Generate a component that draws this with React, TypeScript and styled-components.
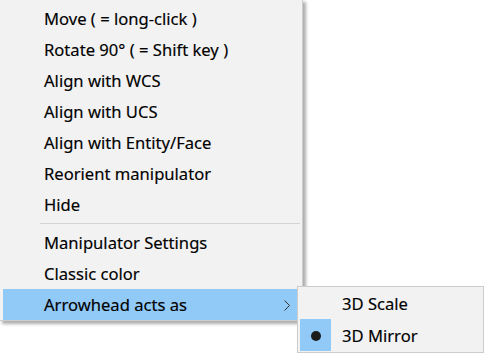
import React from "react";
import styled, { createGlobalStyle } from "styled-components";

const GlobalStyle = createGlobalStyle`
  html, body {
    margin: 0;
    padding: 0;
    background: #ffffff;
  }
  body {
    min-height: 354px;
    font-family: "Noto Sans", "Open Sans", "Liberation Sans", sans-serif;
    font-size: 16.6px;
    color: #000000;
  }
  #root {
    min-height: 354px;
  }
`;

const Menu = styled.div`
  position: relative;
  box-sizing: content-box;
  width: 297px;
  margin: -1px 0 0 -1px;
  padding: 3px 2px 0 3px;
  background: #f2f2f2;
  border: 1px solid #cccccc;
  box-shadow: 3px 3px 3px rgba(0, 0, 0, 0.32);
  display: flex;
  flex-direction: column;
`;

const SubMenu = styled.div`
  position: absolute;
  top: -3px;
  left: calc(100% - 3px);
  box-sizing: border-box;
  width: 187px;
  padding: 0 2px 1px 2px;
  background: #f2f2f2;
  border: 1px solid #cccccc;
  display: flex;
  flex-direction: column;
  z-index: 2;
`;

const Item = styled.div<{ $active?: boolean; $h?: number }>`
  position: relative;
  display: flex;
  align-items: stretch;
  height: ${(p) => p.$h ?? 31}px;
  background: ${(p) => (p.$active ? "#91c9f7" : "transparent")};
  white-space: nowrap;
`;

const CheckCell = styled.div<{ $checked?: boolean }>`
  flex: 0 0 31px;
  display: flex;
  align-items: center;
  justify-content: center;
  background: ${(p) => (p.$checked ? "#91c9f7" : "transparent")};
`;

const Dot = styled.span`
  width: 10px;
  height: 10px;
  margin-top: 1px;
  border-radius: 50%;
  background: #1b1b1b;
`;

const Label = styled.span`
  flex: 1;
  padding: 1px 0 0 10px;
  line-height: 30px;
  -webkit-text-stroke: 0.15px #000;
`;

const SubLabel = styled(Label)`
  padding: 2px 0 0 11px;
`;

const Arrow = styled.span`
  flex: 0 0 auto;
  display: flex;
  align-items: center;
  padding: 1px 10px 0 0;
  color: #333333;
`;

const Separator = styled.div`
  height: 1px;
  margin: 3px 0 3px 37px;
  background: #d4d4d4;
`;

const items = [
  "Move ( = long-click )",
  "Rotate 90° ( = Shift key )",
  "Align with WCS",
  "Align with UCS",
  "Align with Entity/Face",
  "Reorient manipulator",
  "Hide",
];

export default function App() {
  return (
    <>
      <GlobalStyle />
      <Menu>
        {items.map((t) => (
          <Item key={t}>
            <CheckCell />
            <Label>{t}</Label>
          </Item>
        ))}
        <Separator />
        <Item>
          <CheckCell />
          <Label>Manipulator Settings</Label>
        </Item>
        <Item>
          <CheckCell />
          <Label>Classic color</Label>
        </Item>
        <Item $active>
          <CheckCell />
          <Label>Arrowhead acts as</Label>
          <Arrow>
            <svg width="6" height="11" viewBox="0 0 6 11" fill="none">
              <polyline
                points="0.5,0.5 5.5,5.5 0.5,10.5"
                stroke="currentColor"
                strokeWidth="1"
              />
            </svg>
          </Arrow>
          <SubMenu>
            <Item $h={32}>
              <CheckCell />
              <SubLabel>3D Scale</SubLabel>
            </Item>
            <Item $h={32}>
              <CheckCell $checked>
                <Dot />
              </CheckCell>
              <SubLabel>3D Mirror</SubLabel>
            </Item>
          </SubMenu>
        </Item>
      </Menu>
    </>
  );
}
